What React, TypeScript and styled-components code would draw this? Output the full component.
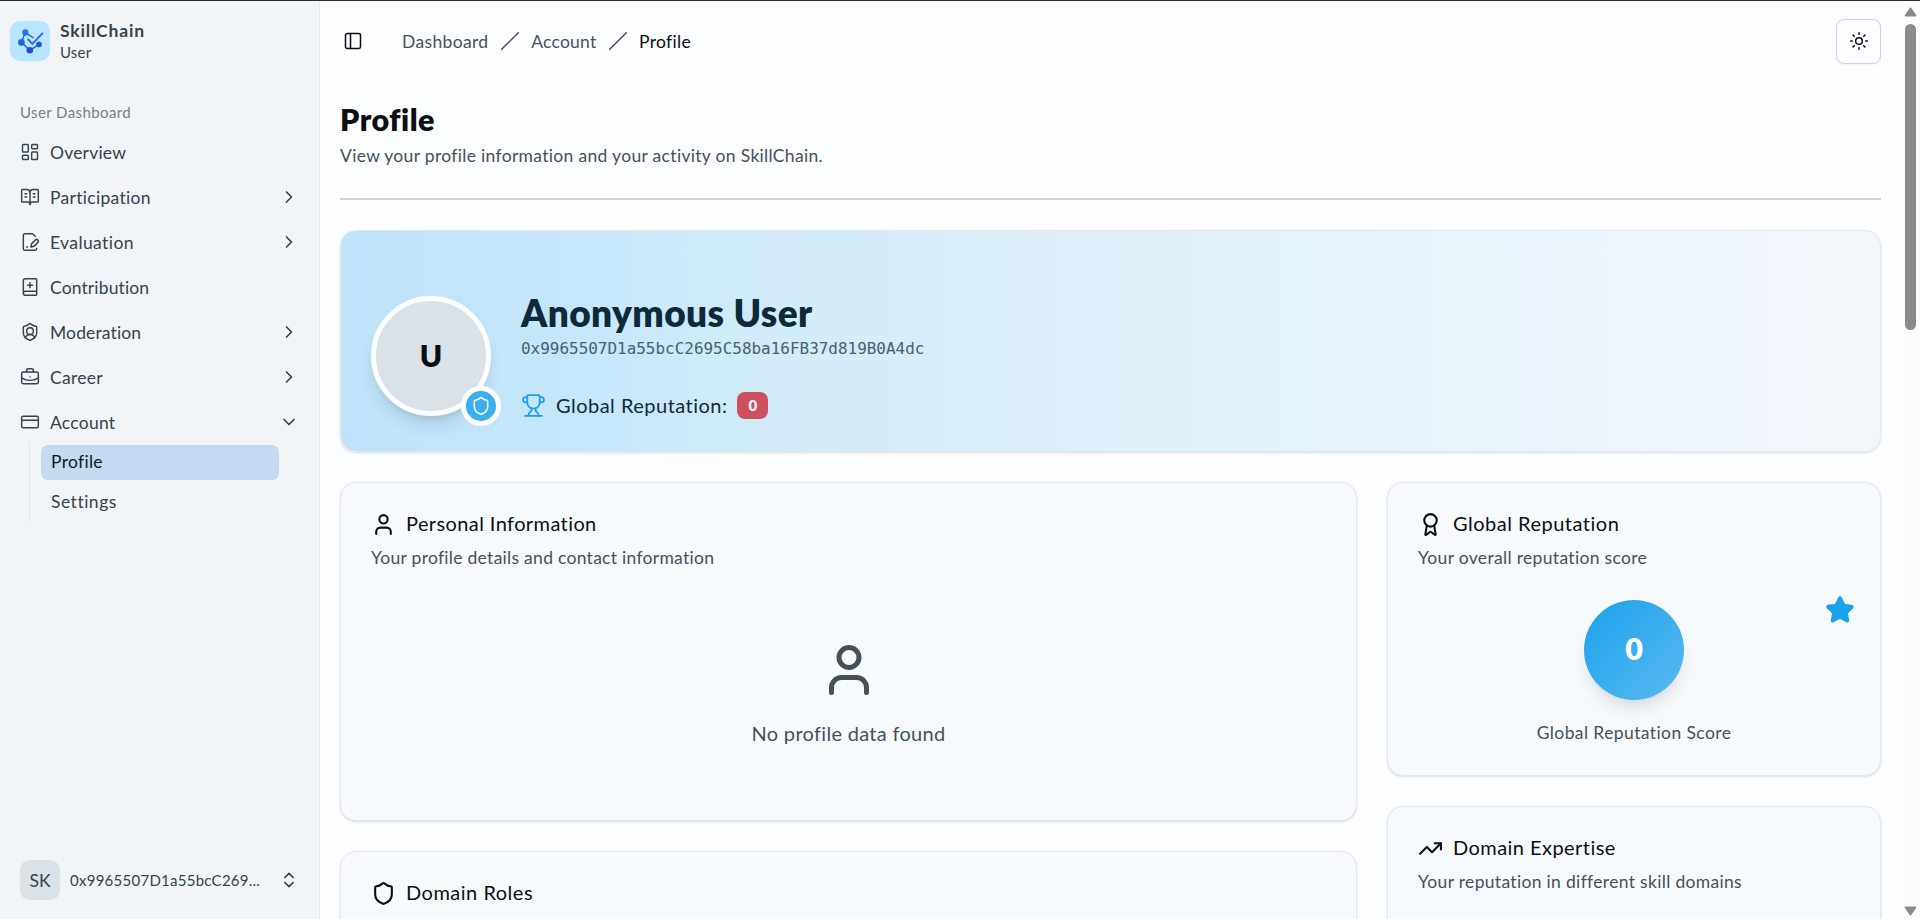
import React from "react";
import styled, { createGlobalStyle } from "styled-components";
import {
  Award, BookOpenText, BookPlus, BriefcaseBusiness, ChevronDown, ChevronRight, ChevronsUpDown,
  CreditCard, FilePenLine, LayoutDashboard, PanelLeft, Shield, ShieldUser, Slash, Star, Sun,
  TrendingUp, Trophy, User,
} from "lucide-react";

const GlobalStyle = createGlobalStyle`
  * { box-sizing: border-box; }
  body { margin: 0; overflow: hidden; background: #fcfdff; color: #0a0f14; font-family: Lato, "Open Sans", sans-serif; font-size: 17.5px; }
  h1, h2, p { margin: 0; font-weight: inherit; }
  svg { display: block; flex: none; }
`;

const Shell = styled.div`
  height: 919px;
  display: flex;
  overflow: hidden;
  border-top: 1px solid #2b2a33;
`;

/* A line of text: size, weight and tracking vary by role. */
const Text = styled.span<{ $size?: number; $track?: number; $weight?: number; $color?: string; $line?: number }>`
  font-size: ${(p) => p.$size ?? 17.5}px;
  line-height: ${(p) => p.$line ?? 25}px;
  letter-spacing: ${(p) => p.$track ?? 0}px;
  font-weight: ${(p) => p.$weight ?? 400};
  color: ${(p) => p.$color ?? "inherit"};
  white-space: nowrap;
`;

const Sidebar = styled.aside`
  width: 320px;
  flex: none;
  display: flex;
  flex-direction: column;
  background: #f1f5f8;
  border-right: 1px solid #e5e9ec;
  color: #36424c;
`;
const Brand = styled.div`
  display: flex;
  align-items: center;
  gap: 10px;
  height: 40px;
  margin: 20px 10px 0;
`;
const LogoTile = styled.div`
  width: 40px;
  height: 40px;
  border-radius: 10px;
  background: #b8e6fe;
`;
const Stack = styled.div`
  display: flex;
  flex-direction: column;
`;
const NavLabel = styled.div`
  margin: 39px 20px 0;
  height: 27px;
  color: #76808a;
`;
const Nav = styled.nav`
  display: flex;
  flex-direction: column;
  gap: 5px;
  padding: 5px 20px 0;
`;
const NavRow = styled.div`
  display: flex;
  align-items: center;
  gap: 10px;
  height: 40px;
  & > :last-child:not(:nth-child(2)) { margin-left: auto; }
`;
const SubNav = styled.div`
  margin: -5px 20px 0 9px;
  height: 80px;
  border-left: 1px solid #e2e7eb;
  padding: 3px 0 0 11px;
  display: flex;
  flex-direction: column;
  gap: 5px;
`;
const SubItem = styled.div<{ $active?: boolean }>`
  height: 35px;
  padding: 4px 10px;
  border-radius: 7px;
  background: ${(p) => (p.$active ? "#c3daf0" : "transparent")};
  color: ${(p) => (p.$active ? "#0d1a26" : "inherit")};
`;
const Account = styled.div`
  display: flex;
  align-items: center;
  gap: 10px;
  margin: auto 20px 19px;
  & > :last-child { margin-left: auto; }
`;
const Initials = styled.div`
  width: 40px;
  height: 40px;
  border-radius: 10px;
  background: #dae1e7;
  display: grid;
  place-items: center;
`;

const Main = styled.main`
  flex: 1;
  min-width: 0;
  padding: 0 20px;
`;
const Header = styled.header`
  height: 80px;
  display: flex;
  align-items: center;
  padding-left: 3px;
`;
const Crumbs = styled.div`
  display: flex;
  align-items: center;
  gap: 11.3px;
  margin-left: 39px;
  color: #46525b;
`;
const ThemeButton = styled.button`
  margin: 0 0 0 auto;
  width: 45px;
  height: 45px;
  padding: 0;
  display: grid;
  place-items: center;
  color: #0a0f14;
  background: #fcfdff;
  border: 1px solid #cfd5dc;
  border-radius: 8px;
  box-shadow: 0 1px 2px rgba(0, 0, 0, 0.05);
`;
const PageTitle = styled.div`
  display: flex;
  flex-direction: column;
  height: 119px;
  padding-top: 19px;
  border-bottom: 2px solid #cdd4da;
`;
const cardEdge = `
  border: 1px solid #e3e8ec;
  border-radius: 16px;
  box-shadow: 0 1px 3px rgba(0,0,0,0.1), 0 1px 2px -1px rgba(0,0,0,0.1);
`;
const Banner = styled.section`
  ${cardEdge}
  margin-top: 30px;
  height: 222px;
  display: flex;
  gap: 30px;
  padding: 65px 30px 0;
  background: linear-gradient(90deg, #bde4f8 0%, #c8e7fa 18%, #cfebf8 25%, #dbeff9 42%, #e5f3fa 62%, #eff5fd 88%, #f2f8fa 100%);
`;
const Avatar = styled.div`
  position: relative;
  width: 120px;
  height: 120px;
  flex: none;
  border-radius: 50%;
  border: 5px solid #fcfdff;
  background: #dae1e7;
  display: grid;
  place-items: center;
  padding-bottom: 2px;
  box-shadow: 0 12px 18px -4px rgba(0,0,0,0.12), 0 5px 7px -5px rgba(0,0,0,0.12);
`;
const AvatarBadge = styled.div`
  position: absolute;
  right: -15px;
  bottom: -15px;
  width: 40px;
  height: 40px;
  border-radius: 50%;
  border: 5px solid #fcfdff;
  background: #3bafee;
  color: #fff;
  display: grid;
  place-items: center;
`;
const Identity = styled(Stack)`
  margin-top: -3px;
`;
const Mono = styled.span`
  margin-top: 3px;
  font: 15.96px/25px "DejaVu Sans Mono", monospace;
  color: #486170;
`;
const Reputation = styled.div`
  display: flex;
  align-items: center;
  margin-top: 30px;
  height: 28px;
  color: #0f2a3a;
  & > svg { color: #1da1ec; margin-right: 10px; }
`;
const Score = styled.span`
  margin-left: 10px;
  width: 31px;
  height: 27px;
  border-radius: 8px;
  background: #cb5160;
  color: #f8eef2;
  display: grid;
  place-items: center;
`;
const Columns = styled.div`
  display: grid;
  grid-template-columns: 1017px 1fr;
  gap: 30px;
  margin-top: 30px;
  align-items: start;
`;
const Column = styled.div`
  display: flex;
  flex-direction: column;
  gap: 30px;
`;
const Card = styled.section<{ $height: number }>`
  ${cardEdge}
  height: ${(p) => p.$height}px;
  padding: 29px 30px 0;
  background: #f7fafd;
`;
const CardTitle = styled.h2`
  display: flex;
  align-items: center;
  gap: 10px;
  height: 25px;
  margin-bottom: 8px;
  & > span { margin-top: -2px; }
`;
const Empty = styled.div`
  display: flex;
  flex-direction: column;
  align-items: center;
  gap: 18px;
  padding-top: 70px;
  color: #465059;
`;
const ScoreArea = styled.div`
  position: relative;
  display: flex;
  flex-direction: column;
  align-items: center;
  gap: 20px;
  padding-top: 30px;
`;
const ScoreCircle = styled.div`
  width: 100px;
  height: 100px;
  border-radius: 50%;
  display: grid;
  place-items: center;
  padding-bottom: 3px;
  color: #fff;
  background: linear-gradient(135deg, #1aa2ea, #5cbaf1);
  box-shadow: 0 12px 18px -4px rgba(0,0,0,0.1), 0 5px 7px -5px rgba(0,0,0,0.1);
`;
const StarMark = styled.div`
  position: absolute;
  right: -5px;
  top: 25px;
  color: #1aa2ea;
`;
const Scrollbar = styled.div`
  width: 19px;
  flex: none;
  display: flex;
  flex-direction: column;
  align-items: center;
  background: #fcfcfd;
  padding: 6px 0 3px;
`;
const Thumb = styled.div`
  width: 11px;
  height: 306px;
  margin: 7px 0 auto;
  border-radius: 6px;
  background: #8b8b8b;
`;

const Logo = () => (
  <svg width="40" height="40" viewBox="0 0 40 40" fill="none">
    <defs>
      <linearGradient id="brand" x1="16" y1="8" x2="22" y2="33" gradientUnits="userSpaceOnUse">
        <stop stopColor="#1e7df0" />
        <stop offset="1" stopColor="#2148cf" />
      </linearGradient>
    </defs>
    <path d="M23.5 17 15.3 11.3 11.4 21.4 19.8 29.4 29 23.4" stroke="#2563d8" strokeWidth="1.5" />
    <g fill="url(#brand)">
      <circle cx="15.3" cy="11.4" r="3.1" />
      <circle cx="11.4" cy="21.4" r="3.3" />
      <circle cx="19.8" cy="29.3" r="3.3" />
      <circle cx="29" cy="23.4" r="2.8" />
    </g>
    <path d="M18.2 18.5 22.4 22.8 32.4 12.4" stroke="#b8e6fe" strokeWidth="3.2" strokeLinecap="round" />
    <path d="M18.2 18.5 22.4 22.8 32.4 12.4" stroke="#2c68f5" strokeWidth="1.9" strokeLinecap="round" />
  </svg>
);

const navItems = [
  { label: "Overview", Icon: LayoutDashboard, track: 0.2 },
  { label: "Participation", Icon: BookOpenText, track: 0.3, more: true },
  { label: "Evaluation", Icon: FilePenLine, track: 0.4, more: true },
  { label: "Contribution", Icon: BookPlus, track: 0.13 },
  { label: "Moderation", Icon: ShieldUser, track: 0.13, more: true },
  { label: "Career", Icon: BriefcaseBusiness, track: 0.25, more: true },
];

export default function App() {
  return (
    <>
      <GlobalStyle />
      <Shell>
        <Sidebar>
          <Brand>
            <LogoTile><Logo /></LogoTile>
            <Stack>
              <Text $weight={700} $line={21} $track={0.85}>SkillChain</Text>
              <Text $size={15} $line={22} $track={0.2}>User</Text>
            </Stack>
          </Brand>
          <NavLabel><Text $size={15} $track={0.4}>User Dashboard</Text></NavLabel>
          <Nav>
            {navItems.map(({ label, Icon, track, more }) => (
              <NavRow key={label}>
                <Icon size={20} strokeWidth={1.75} />
                <Text $track={track}>{label}</Text>
                {more && <ChevronRight size={20} strokeWidth={2} />}
              </NavRow>
            ))}
            <NavRow>
              <CreditCard size={20} strokeWidth={1.75} />
              <Text $track={0.25}>Account</Text>
              <ChevronDown size={20} strokeWidth={2} />
            </NavRow>
            <SubNav>
              <SubItem $active><Text $track={0.3}>Profile</Text></SubItem>
              <SubItem><Text $track={0.5}>Settings</Text></SubItem>
            </SubNav>
          </Nav>
          <Account>
            <Initials><Text>SK</Text></Initials>
            <Text $size={15} $track={0.26}>0x9965507D1a55bcC269...</Text>
            <ChevronsUpDown size={20} strokeWidth={2} />
          </Account>
        </Sidebar>
        <Main>
          <Header>
            <PanelLeft size={20} strokeWidth={1.8} />
            <Crumbs>
              <Text $track={0.35} $line={27}>Dashboard</Text>
              <Slash size={20} strokeWidth={1.8} />
              <Text $track={0.25}>Account</Text>
              <Slash size={20} strokeWidth={1.8} />
              <Text $track={0.3} $color="#0a0f14">Profile</Text>
            </Crumbs>
            <ThemeButton aria-label="Toggle theme"><Sun size={20} strokeWidth={1.8} /></ThemeButton>
          </Header>
          <PageTitle>
            <Text as="h1" $size={30.5} $weight={800} $line={39} $track={0.5}>Profile</Text>
            <Text as="p" $line={33} $track={0.32} $color="#465059">View your profile information and your activity on SkillChain.</Text>
          </PageTitle>
          <Banner>
            <Avatar>
              <Text $size={30} $weight={800}>U</Text>
              <AvatarBadge><Shield size={20} strokeWidth={1.8} /></AvatarBadge>
            </Avatar>
            <Identity>
              <Text as="h2" $size={37} $weight={800} $line={40} $track={0.4} $color="#0d2a3b">Anonymous User</Text>
              <Mono>0x9965507D1a55bcC2695C58ba16FB37d819B0A4dc</Mono>
              <Reputation>
                <Trophy size={25} strokeWidth={1.8} />
                <Text $size={20} $track={0.48}>Global Reputation:</Text>
                <Score><Text $size={15} $weight={800}>0</Text></Score>
              </Reputation>
            </Identity>
          </Banner>
          <Columns>
            <Column>
              <Card $height={339}>
                <CardTitle><User size={25} /><Text $size={20} $track={0.4}>Personal Information</Text></CardTitle>
                <Text as="p" $track={0.28} $color="#465059">Your profile details and contact information</Text>
                <Empty>
                  <User size={60} />
                  <Text $size={20} $line={30} $track={0.3}>No profile data found</Text>
                </Empty>
              </Card>
              <Card $height={300}>
                <CardTitle><Shield size={25} /><Text $size={20} $track={0.5}>Domain Roles</Text></CardTitle>
              </Card>
            </Column>
            <Column>
              <Card $height={294}>
                <CardTitle><Award size={25} /><Text $size={20} $track={0.5}>Global Reputation</Text></CardTitle>
                <Text as="p" $track={0.32} $color="#465059">Your overall reputation score</Text>
                <ScoreArea>
                  <ScoreCircle><Text $size={30.5} $weight={800}>0</Text></ScoreCircle>
                  <Text $track={0.4} $color="#465059">Global Reputation Score</Text>
                  <StarMark><Star size={30} fill="currentColor" /></StarMark>
                </ScoreArea>
              </Card>
              <Card $height={300}>
                <CardTitle><TrendingUp size={25} /><Text $size={20} $track={0.45}>Domain Expertise</Text></CardTitle>
                <Text as="p" $track={0.32} $color="#465059">Your reputation in different skill domains</Text>
              </Card>
            </Column>
          </Columns>
        </Main>
        <Scrollbar>
          <svg width="13" height="10" viewBox="0 0 13 10"><path d="M6.5 1.2 11.6 8.6H1.4Z" fill="#8b8b8b" stroke="#8b8b8b" strokeWidth="1.6" strokeLinejoin="round" /></svg>
          <Thumb />
          <svg width="13" height="10" viewBox="0 0 13 10"><path d="M6.5 8.8 11.6 1.4H1.4Z" fill="#8b8b8b" stroke="#8b8b8b" strokeWidth="1.6" strokeLinejoin="round" /></svg>
        </Scrollbar>
      </Shell>
    </>
  );
}
